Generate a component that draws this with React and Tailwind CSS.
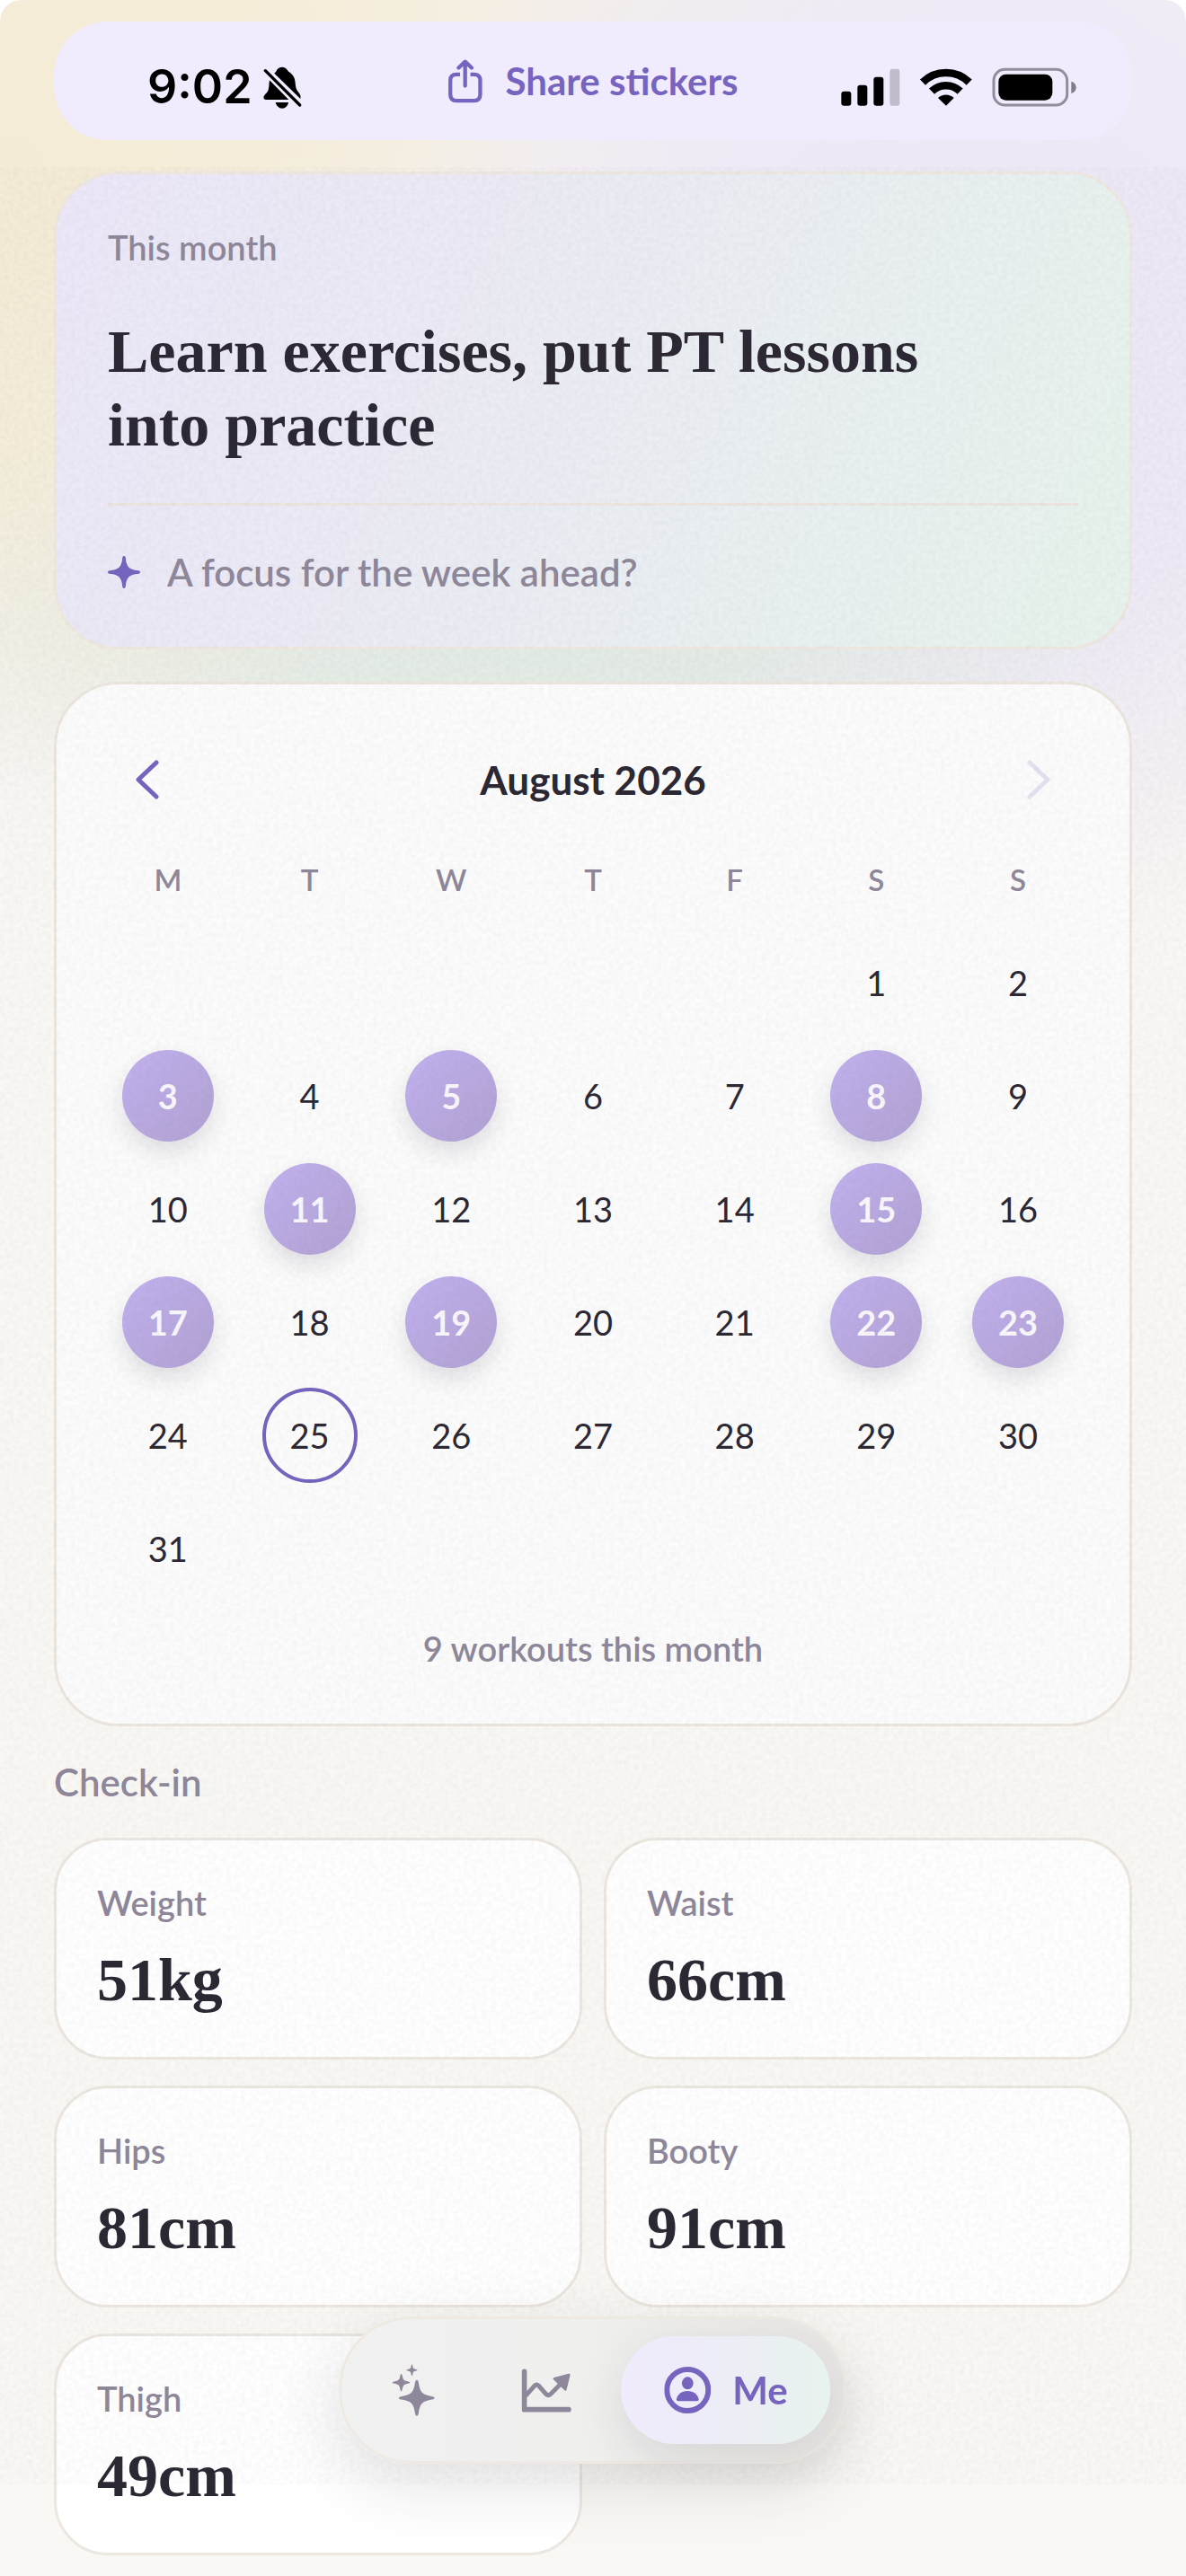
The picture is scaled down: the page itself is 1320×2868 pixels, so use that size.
import React, { useState } from "react";

const weekdays = ["M", "T", "W", "T", "F", "S", "S"];
const workoutDays = [3, 5, 8, 11, 15, 17, 19, 22, 23];
const today = 25;

const measurements = [
  { label: "Weight", value: "51kg" },
  { label: "Waist", value: "66cm" },
  { label: "Hips", value: "81cm" },
  { label: "Booty", value: "91cm" },
  { label: "Thigh", value: "49cm" },
];

// offset = empty cells before the 1st (Monday first)
const getWeeks = (offset, total) => {
  const cells = [
    ...Array(offset).fill(null),
    ...Array.from({ length: total }, (_, i) => i + 1),
  ];
  while (cells.length % 7 !== 0) cells.push(null);
  const weeks = [];
  for (let i = 0; i < cells.length; i += 7) weeks.push(cells.slice(i, i + 7));
  return weeks;
};

const BellOffIcon = () => (
  <svg viewBox="37 43 129 141" className="h-[47px] w-[43px]" aria-hidden="true">
    <path
      d="M74 66 C78 63 80 60 82 56 C85 49 92 45 100 45 C108 45 114 49 118 56 C120 60 123 61 127 64 C139 73 143 84 144 98 C145 112 147 122 157 132 C162 137 162 145 161 151 Z"
      fill="#000"
    />
    <path
      d="M58 89 L122 154 H46 C38 154 36 146 41 139 C46 133 52 129 54 121 C57 111 56 99 58 89 Z"
      fill="#000"
    />
    <path d="M78 163 H121 C119 175 111 183 100 183 C89 183 81 175 78 163 Z" fill="#000" />
    <path d="M44 57 L159 172" stroke="#000" strokeWidth="10" strokeLinecap="round" />
  </svg>
);

const ShareIcon = () => (
  <svg
    viewBox="654 19 120 149"
    className="h-[49px] w-[40px]"
    fill="none"
    stroke="currentColor"
    strokeWidth="13"
    strokeLinecap="round"
    strokeLinejoin="round"
    aria-hidden="true"
  >
    <path
      d="M696 70 H684 Q663 70 663 90 V138 Q663 159 684 159 H743 Q764 159 764 138 V90 Q764 70 743 70 H731"
      strokeLinecap="butt"
    />
    <path d="M713 109 V28 M691 48 L713 27 L735 48" />
  </svg>
);

const StatusIcons = () => (
  <svg viewBox="110 43 786 132" className="h-[44px] w-[262px]" aria-hidden="true">
    <rect x="111" y="123" width="33" height="48" rx="9" />
    <rect x="165" y="102" width="33" height="69" rx="9" />
    <rect x="219" y="75" width="33" height="96" rx="9" />
    <rect x="273" y="48" width="33" height="123" rx="9" fill="#c1bccb" />
    <g fill="none" stroke="#000" strokeWidth="26">
      <path d="M383 93 A110 110 0 0 1 538 93" />
      <path d="M413 123 A68 68 0 0 1 508 123" />
    </g>
    <path d="M434 145 A38 38 0 0 1 487 145 L461 171 Z" />
    <rect x="620" y="50" width="245" height="119" rx="37" fill="none" stroke="#928d9b" strokeWidth="9" />
    <rect x="636" y="66" width="180" height="87" rx="25" />
    <path d="M879 90 Q895 95 895 110 Q895 125 879 130 Z" fill="#807c88" />
  </svg>
);

const SparkIcon = () => (
  <svg viewBox="0 0 36 36" className="h-[36px] w-[36px]" fill="#7664bf" aria-hidden="true">
    <path d="M18 0 Q20 0 20 4 C21 12 24 15 32 16 Q36 16 36 18 Q36 20 32 20 C24 21 21 24 20 32 Q20 36 18 36 Q16 36 16 32 C15 24 12 21 4 20 Q0 20 0 18 Q0 16 4 16 C12 15 15 12 16 4 Q16 0 18 0 Z" />
  </svg>
);

const SparklesIcon = () => (
  <svg viewBox="53 95 144 176" className="h-[58px] w-[48px]" fill="currentColor" aria-hidden="true">
    <path d="M136 149 Q141 149 142 158 C146 190 155 199 187 204 Q196 206 196 210 Q196 214 187 215 C155 220 146 230 142 261 Q141 270 136 270 Q131 270 130 261 C126 230 117 220 85 215 Q75 214 75 210 Q75 206 85 204 C117 199 126 190 130 158 Q131 149 136 149 Z" />
    <path d="M83 128 Q86 128 87 134 C89 149 93 152 107 154 Q113 155 113 157 Q113 160 107 161 C93 163 89 167 87 181 Q86 187 83 187 Q81 187 80 181 C78 167 74 163 60 161 Q53 160 53 157 Q53 155 60 154 C74 152 78 149 80 134 Q81 128 83 128 Z" />
    <path d="M119 96 Q121 96 122 101 C123 110 126 112 134 113 Q138 114 138 116 Q138 117 134 118 C126 119 123 122 122 130 Q121 135 119 135 Q118 135 117 130 C116 122 113 119 105 118 Q101 117 101 116 Q101 114 105 113 C113 112 116 110 117 101 Q118 96 119 96 Z" />
  </svg>
);

const ChartIcon = () => (
  <svg viewBox="482 112 168 147" className="h-[49px] w-[56px]" fill="none" stroke="currentColor" aria-hidden="true">
    <path d="M492 122 V249 H640" strokeWidth="17" strokeLinecap="round" strokeLinejoin="round" />
    <path d="M496 203 L526 170 Q533 163 540 170 L564 197 Q571 205 579 198 L616 161" strokeWidth="15" />
    <path
      d="M592 146 L641 133 L629 182 Z"
      fill="currentColor"
      strokeWidth="8"
      strokeLinejoin="round"
    />
  </svg>
);

const ProfileIcon = () => (
  <svg viewBox="0 0 156 156" className="h-[52px] w-[52px]" fill="currentColor" aria-hidden="true">
    <circle cx="78" cy="78" r="69" fill="none" stroke="currentColor" strokeWidth="18" />
    <ellipse cx="78" cy="55" rx="19" ry="21" />
    <path d="M46 115 Q41 115 41 109 C44 92 58 81 78 81 C98 81 112 92 115 109 Q115 115 110 115 Z" />
  </svg>
);

const Chevron = ({ d }) => (
  <svg viewBox="0 0 26 44" className="h-[44px] w-[26px]" fill="none" aria-hidden="true">
    <path d={d} stroke="currentColor" strokeWidth="5" strokeLinecap="round" strokeLinejoin="round" />
  </svg>
);

// paper texture laid over the page below the header
const Grain = () => (
  <svg
    className="pointer-events-none fixed inset-x-0 top-[186px] h-[calc(100vh-288px)] w-full"
    aria-hidden="true"
  >
    <filter id="grain" x="0" y="0" width="100%" height="100%">
      <feTurbulence type="fractalNoise" baseFrequency="0.19" numOctaves="3" seed="4" />
      <feColorMatrix values="0 0 0 0 0.1  0 0 0 0 0.1  0 0 0 0 0.1  0.08 0 0 0 -0.022" />
    </filter>
    <rect width="100%" height="100%" filter="url(#grain)" />
  </svg>
);

const Header = () => (
  <header className="sticky top-0 z-10 px-[60px] pt-6 pb-[30px]">
    <div className="grid h-[132px] grid-cols-[1fr_auto_1fr] items-center rounded-[60px] bg-[#f1ebfe]">
      <div className="flex items-center gap-3 pt-[14px] pl-[104px]">
        <time className="font-[Inter,sans-serif] text-[52px] leading-[54px] font-semibold text-black">
          9:02
        </time>
        <BellOffIcon />
      </div>
      <button className="flex items-center gap-6 text-[42px] leading-[52px] font-bold text-[#7664bf]">
        <ShareIcon />
        Share stickers
      </button>
      <div className="flex justify-end pt-[14px] pr-[62px]">
        <StatusIcons />
      </div>
    </div>
  </header>
);

const FocusCard = () => (
  <section className="rounded-[72px] border-[3px] border-[#efe8e0] bg-linear-[115deg,#ece8f9_5%,#ecebf5_35%,#eaf0f2_68%,#e8f3ed_95%] p-[57px]">
    <p className="text-[38px] leading-[48px] font-semibold text-[#8f889b]">This month</p>
    <h1 className="mt-[51px] max-w-[960px] font-['Liberation_Serif',serif] text-[68px] leading-[82px] font-bold">
      Learn exercises, put PT lessons into practice
    </h1>
    <button className="mt-[46px] flex w-full items-center gap-[30px] border-t-[3px] border-[#ece5e0] pt-12 text-[42px] leading-[52px] font-semibold text-[#8f889b]">
      <SparkIcon />
      A focus for the week ahead?
    </button>
  </section>
);

const Day = ({ day }) => {
  if (workoutDays.includes(day)) {
    return (
      <button className="inline-flex size-[102px] items-center justify-center rounded-full bg-linear-135 from-[#c2b2f0] to-[#b1a1d3] font-bold text-[#f9f7fc] shadow-[0_12px_24px_rgba(60,50,80,0.14)]">
        {day}
      </button>
    );
  }
  if (day === today) {
    return (
      <button
        aria-current="date"
        className="inline-flex size-[106px] items-center justify-center rounded-full border-4 border-[#7664bf]"
      >
        {day}
      </button>
    );
  }
  return <button className="inline-flex size-[102px] items-center justify-center">{day}</button>;
};

const Calendar = () => (
  <section className="rounded-[72px] border-[3px] border-[#ece6df] bg-[#fcfcfc] px-[45px] pt-[79px] pb-[60px]">
    <div className="flex items-center justify-between px-[43px]">
      <button aria-label="Previous month" className="text-[#7664bf]">
        <Chevron d="M23 3 L3 22 L23 41" />
      </button>
      <h2 className="text-[44px] leading-[54px] font-bold">August 2026</h2>
      <button aria-label="Next month" disabled className="text-[#e4e1f0]">
        <Chevron d="M3 3 L23 22 L3 41" />
      </button>
    </div>
    <table className="mt-16 w-full table-fixed text-center">
      <thead>
        <tr>
          {weekdays.map((name, i) => (
            <th key={i} className="pb-8 text-[33px] leading-[40px] font-semibold text-[#8f889b]">
              {name}
            </th>
          ))}
        </tr>
      </thead>
      <tbody className="text-[38px] leading-[48px]">
        {getWeeks(5, 31).map((week, i) => (
          <tr key={i}>
            {week.map((day, j) => (
              <td key={j} className="h-[126px] align-middle">
                <div className="flex justify-center">{day && <Day day={day} />}</div>
              </td>
            ))}
          </tr>
        ))}
      </tbody>
    </table>
    <p className="mt-6 text-center text-[38px] leading-[48px] font-semibold text-[#8f889b]">
      {workoutDays.length} workouts this month
    </p>
  </section>
);

const CheckIn = () => (
  <section>
    <h2 className="text-[42px] leading-[52px] font-semibold text-[#8f889b]">Check-in</h2>
    <dl className="mt-9 grid grid-cols-2 gap-x-6 gap-y-[29px]">
      {measurements.map((item) => (
        <div
          key={item.label}
          className="rounded-[60px] border-[3px] border-[#ece8e1] bg-white p-[45px]"
        >
          <dt className="text-[38px] leading-[48px] font-semibold text-[#8f889b]">{item.label}</dt>
          <dd className="mt-[21px] font-['Liberation_Serif',serif] text-[68px] leading-[82px] font-bold">
            {item.value}
          </dd>
        </div>
      ))}
    </dl>
  </section>
);

const TabBar = () => {
  const [active, setActive] = useState("Me");
  const tabs = [
    { name: "Today", icon: <SparklesIcon /> },
    { name: "Progress", icon: <ChartIcon /> },
    { name: "Me", icon: <ProfileIcon /> },
  ];

  return (
    <nav className="fixed bottom-[125px] left-1/2 z-20 flex -translate-x-1/2 gap-[18px] rounded-[80px] border-[3px] border-[#efe9e3] bg-linear-to-r from-[#f1f1f1] via-[#efefee] to-[#e8e6e4] px-[15px] py-[19px] shadow-[0_24px_72px_rgba(40,35,50,0.13)]">
      {tabs.map((tab) =>
        tab.name === active ? (
          <button
            key={tab.name}
            aria-current="page"
            className="flex h-[120px] items-center gap-6 rounded-full bg-linear-to-r from-[#f0ebfd] via-[#ecedf6] to-[#e8f3ee] px-12 text-[42px] leading-[52px] font-bold text-[#7664bf] shadow-[0_18px_54px_rgba(40,35,50,0.10)]"
          >
            {tab.icon}
            {tab.name}
          </button>
        ) : (
          <button
            key={tab.name}
            aria-label={tab.name}
            onClick={() => setActive(tab.name)}
            className="flex h-[120px] w-[130px] items-center justify-center text-[#8f889b]"
          >
            {tab.icon}
          </button>
        )
      )}
    </nav>
  );
};

const App = () => {
  return (
    <div className="bg-white">
      <div className="min-h-screen rounded-t-[24px] bg-[#faf8f4] bg-[radial-gradient(620px_660px_at_0px_220px,#f4ecd5_0%,#f4ecd5cc_45%,#f4ecd500_100%),radial-gradient(700px_340px_at_560px_660px,#e2ebe4_0%,#e2ebe4cc_45%,#e2ebe400_100%),radial-gradient(640px_700px_at_1080px_380px,#ece7f6_0%,#ece7f6cc_45%,#ece7f600_100%),radial-gradient(900px_300px_at_200px_0px,#f6eedb_0%,#f6eedb00_100%),linear-gradient(180deg,#f4f2f6_0px,#f4f2f6_300px,#f4f2f600_1000px)] pb-5 font-[Lato,sans-serif] text-[#2b2733]">
        <Header />
        <main className="flex flex-col gap-9 px-[60px] pt-[5px]">
          <FocusCard />
          <Calendar />
          <CheckIn />
        </main>
        <Grain />
        <TabBar />
      </div>
    </div>
  );
};

export default App;
